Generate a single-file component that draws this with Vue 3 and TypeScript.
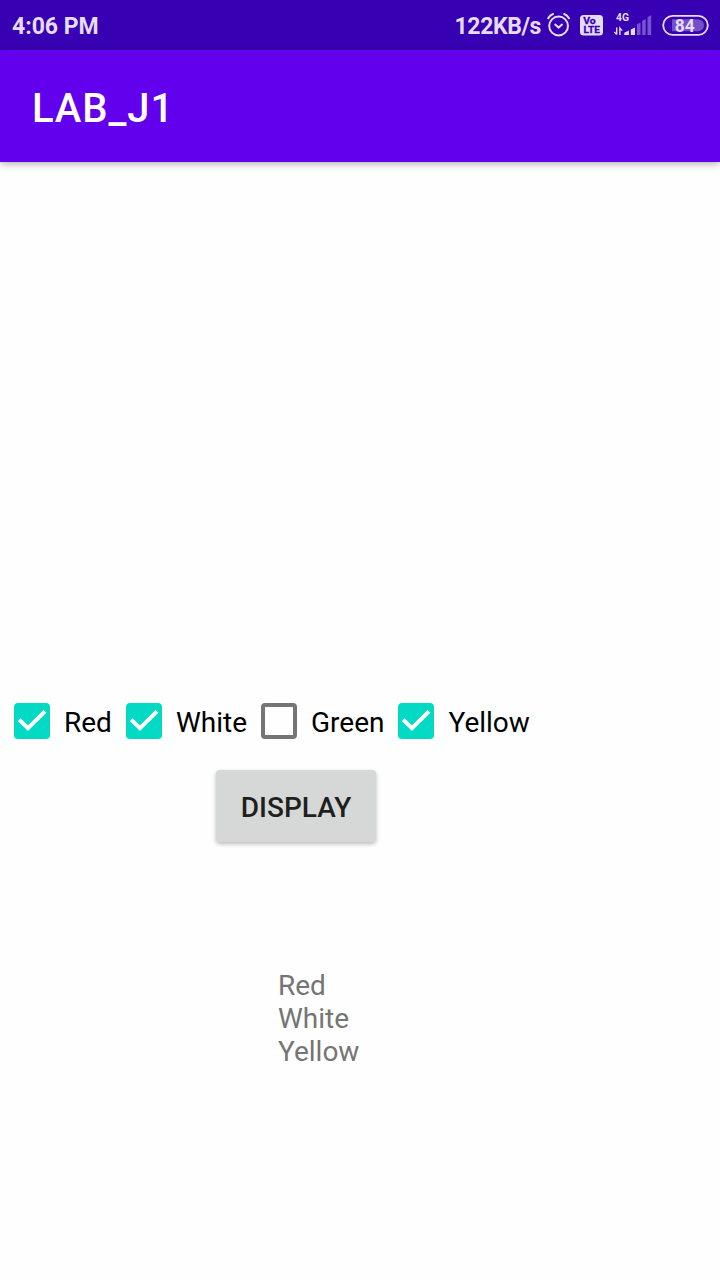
<script setup lang="ts">
import { ref } from 'vue'

interface ColorOption {
  name: string
  checked: boolean
}

const options = ref<ColorOption[]>([
  { name: 'Red', checked: true },
  { name: 'White', checked: true },
  { name: 'Green', checked: false },
  { name: 'Yellow', checked: true },
])

const selected = ref<string[]>(['Red', 'White', 'Yellow'])

function display(): void {
  selected.value = options.value.filter((o) => o.checked).map((o) => o.name)
}
</script>

<template>
  <div class="screen">
    <header class="status">
      <span class="time">4:06 PM</span>
      <span class="speed">122KB/s</span>
      <svg class="alarm" width="24" height="26" viewBox="0 0 24 26" fill="none" stroke="#e6dcf8" stroke-width="2" stroke-linecap="round">
        <circle cx="11.6" cy="14" r="9.4" />
        <path d="M1.2 6.2 Q3 3 6 2 M22 6.2 Q20.2 3 17.2 2" />
        <path d="M8.2 12.6 L11.6 15.6 L15 12.6" />
      </svg>
      <svg class="volte" width="23" height="22" viewBox="0 0 23 22">
        <rect y="1" width="23" height="20.5" rx="3.5" fill="#e6dcf8" />
        <text x="3.2" y="10" textLength="12.5" lengthAdjust="spacingAndGlyphs">Vo</text>
        <text x="3.6" y="19" textLength="16.2" lengthAdjust="spacingAndGlyphs">LTE</text>
      </svg>
      <svg class="signal" width="38" height="24" viewBox="0 0 38 24">
        <text x="2" y="7.6" textLength="13" lengthAdjust="spacingAndGlyphs">4G</text>
        <path d="M2.7 14.5v7M0.4 19l2.3 2.6M5.9 22v-7l2.3 2.6" fill="none" stroke="#e6dcf8" stroke-width="1.4" />
        <path d="M10.3 22v-2.2l4.6-2.4V22zM16.8 22v-5.4l4.2-2.2V22z" fill="#e6dcf8" />
        <path d="M22.9 22V11.2l3.6-1.8V22zM28.2 22V7.7l3.5-1.8V22zM33.5 22V4.2L37.2 2V22z" fill="#7654cb" />
      </svg>
      <svg class="battery" width="47" height="22" viewBox="0 0 47 22">
        <rect x="1.2" y="1.8" width="44.6" height="19" rx="9.5" fill="none" stroke="#e6dcf8" stroke-width="1.8" />
        <path d="M10 5.2h26a6 6 0 0 1 0 12H10z" fill="#7250c8" />
        <text x="12.8" y="17.6" textLength="20" lengthAdjust="spacingAndGlyphs">84</text>
      </svg>
    </header>

    <div class="app-bar"><h1>LAB_J1</h1></div>

    <main>
      <div class="options">
        <label v-for="option in options" :key="option.name" class="option">
          <input v-model="option.checked" type="checkbox" />
          <span class="box" :class="{ on: option.checked }">
            <svg v-if="option.checked" width="36" height="36" viewBox="0 0 36 36">
              <path d="M5.2 16.6L14 25.2L31 8.4" fill="none" stroke="#fff" stroke-width="4" />
            </svg>
          </span>
          <span class="label">{{ option.name }}</span>
        </label>
      </div>
      <button type="button" @click="display">DISPLAY</button>
      <div class="result">
        <div v-for="name in selected" :key="name">{{ name }}</div>
      </div>
    </main>
  </div>
</template>

<style>
body {
  margin: 0;
  background: #fefefe;
}
</style>

<style scoped>
.screen {
  width: 720px;
  height: 1280px;
  display: flex;
  flex-direction: column;
  overflow: hidden;
  background: #fefefe;
  font-family: Roboto, sans-serif;
}

.status {
  flex: none;
  box-sizing: border-box;
  height: 50px;
  padding: 0 11px 0 12px;
  display: flex;
  align-items: center;
  background: #3700b3;
  color: #e6dcf8;
  font-size: 23px;
  line-height: 28px;
  font-weight: 700;
}

.status svg {
  flex: none;
}

.status svg text {
  font-family: Roboto, sans-serif;
  font-weight: 700;
}

.time {
  padding-top: 4px;
}

.speed {
  margin-left: auto;
  padding-top: 4px;
  letter-spacing: -0.4px;
}

.alarm {
  margin-left: 6px;
}

.volte {
  margin-left: 9px;
}

.volte text {
  font-size: 9.5px;
  fill: #3700b3;
  stroke: #3700b3;
  stroke-width: 0.3px;
}

.signal {
  margin-left: 11px;
}

.signal text {
  font-size: 10px;
  fill: #e6dcf8;
}

.battery {
  margin-left: 10px;
}

.battery text {
  font-size: 18.5px;
  fill: #e6dcf8;
}

.app-bar {
  flex: none;
  z-index: 1;
  height: 112px;
  padding-left: 32px;
  display: flex;
  align-items: center;
  background: #6200ee;
  box-shadow: 0 2px 7px rgba(0, 0, 0, 0.3);
}

h1 {
  margin: 6px 0 0;
  color: #fff;
  font-size: 40px;
  font-weight: 500;
  line-height: 48px;
  letter-spacing: 0.9px;
}

main {
  flex: 1;
  display: flex;
  flex-direction: column;
  align-items: flex-start;
  padding-top: 527px;
}

.options {
  display: flex;
  height: 64px;
  align-items: center;
}

.option {
  display: flex;
  align-items: center;
  padding-left: 14px;
  color: #000;
  font-size: 28px;
  line-height: 32px;
}

.label {
  padding-top: 4px;
}

.option input {
  appearance: none;
  width: 0;
  height: 0;
  margin: 0;
}

.box {
  box-sizing: border-box;
  width: 36px;
  height: 36px;
  margin-right: 14px;
  border: 4px solid #757575;
  border-radius: 4px;
}

.box.on {
  border: 0;
  background: #03dac5;
}

.box svg {
  display: block;
}

button {
  width: 160px;
  height: 72px;
  margin: 17px 0 0 216px;
  padding: 2px 0 0;
  border: 0;
  border-radius: 4px;
  background: #d6d7d7;
  box-shadow: 0 2px 4px rgba(0, 0, 0, 0.27);
  color: #1f1f1f;
  font-family: Roboto, sans-serif;
  font-size: 28px;
  font-weight: 500;
}

.result {
  margin: 127px 0 0 278px;
  color: #757575;
  font-size: 28px;
  line-height: 33px;
}
</style>
